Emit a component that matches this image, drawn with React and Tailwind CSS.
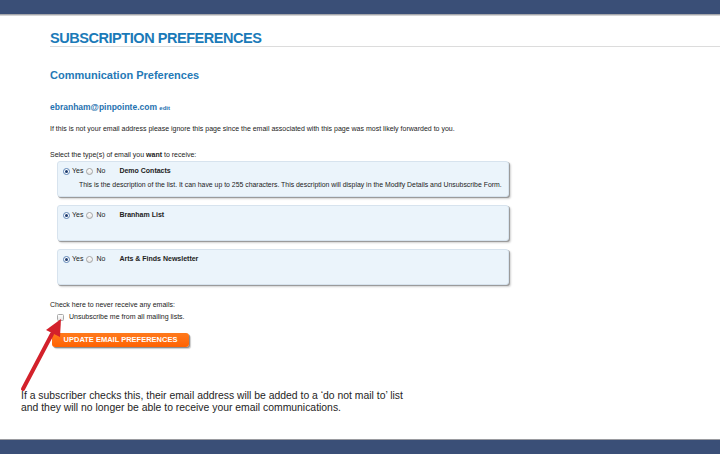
import React from "react";

function Radio({ checked }) {
  return checked ? (
    <span className="inline-flex items-center justify-center w-[7px] h-[7px] rounded-full border border-[#5b83b5] bg-white shrink-0">
      <span className="w-[3px] h-[3px] rounded-full bg-[#1d3b6e]" />
    </span>
  ) : (
    <span className="inline-block w-[7px] h-[7px] rounded-full border border-[#a3a3a3] bg-gradient-to-b from-white to-[#e4e4e4] shrink-0" />
  );
}

function ListBox({ name, desc }) {
  return (
    <div className="ml-[7px] w-[452px] h-[36px] rounded-[3px] border border-[#d7e3ee] bg-[#ebf4fb] shadow-[1px_1px_0_#9b9b9b,2px_2px_2px_rgba(0,0,0,0.18)] pl-[5px] pt-[4px]">
      <div className="flex items-center h-[10px] text-[7px] leading-[10px] text-[#222]">
        <Radio checked />
        <span className="ml-[2px]">Yes</span>
        <span className="ml-[3px] flex items-center">
          <Radio />
        </span>
        <span className="ml-[3px]">No</span>
        <span className="ml-[14px] font-bold">{name}</span>
      </div>
      {desc && (
        <div className="mt-[4px] ml-[16px] text-[6.9px] leading-[10px] text-[#222] whitespace-nowrap">
          {desc}
        </div>
      )}
    </div>
  );
}

export default function App() {
  return (
    <div className="relative w-[720px] h-[454px] overflow-hidden bg-white flex flex-col font-['Liberation_Sans',Arial,sans-serif]">
      <div className="h-[14px] shrink-0 bg-[#3a4f77]" />
      <div className="h-[2px] shrink-0 bg-gradient-to-b from-[#8f9197] to-[#ececec]" />

      <div className="pl-[50px]">
        <div className="mt-[15px] border-b border-[#dcdcdc]">
          <h1 className="text-[14.5px] leading-[15px] font-bold tracking-[-0.45px] text-[#1a7ab8]">
            SUBSCRIPTION PREFERENCES
          </h1>
        </div>

        <h2 className="mt-[22px] text-[11px] leading-[13px] font-bold text-[#2579b6]">
          Communication Preferences
        </h2>

        <div className="mt-[20px] text-[8.5px] leading-[11px] font-bold text-[#1f72b0]">
          ebranham@pinpointe.com <span className="text-[6px] font-bold">edit</span>
        </div>

        <p className="mt-[10px] text-[7px] leading-[10px] text-[#222]">
          If this is not your email address please ignore this page since the email associated with this page was most likely forwarded to you.
        </p>

        <p className="mt-[16px] text-[7px] leading-[10px] text-[#222]">
          Select the type(s) of email you <span className="font-bold">want</span> to receive:
        </p>

        <div className="mt-[1px] flex flex-col gap-[8px]">
          <ListBox
            name="Demo Contacts"
            desc="This is the description of the list. It can have up to 255 characters. This description will display in the Modify Details and Unsubscribe Form."
          />
          <ListBox name="Branham List" />
          <ListBox name="Arts & Finds Newsletter" />
        </div>

        <p className="mt-[15px] text-[7px] leading-[10px] text-[#222]">
          Check here to never receive any emails:
        </p>

        <div className="mt-[3px] ml-[7px] flex items-center h-[8px] text-[7px] leading-[10px] text-[#222]">
          <span className="w-[7px] h-[7px] rounded-[1.5px] border border-[#a8a8a8] bg-gradient-to-b from-white to-[#e6e6e6] shrink-0" />
          <span className="ml-[5px]">Unsubscribe me from all mailing lists.</span>
        </div>

        <div className="mt-[12px] ml-[2px] w-[137px] h-[14px] rounded-[3px] bg-gradient-to-b from-[#ff7a1c] to-[#ff6200] shadow-[1px_1px_0_#8e8e8e,2px_2px_1px_rgba(0,0,0,0.2)] flex items-center justify-center text-[7.5px] leading-[14px] font-bold text-white">
          UPDATE EMAIL PREFERENCES
        </div>
      </div>

      <div className="mt-[43px] pl-[21px] text-[10.4px] leading-[12px] text-[#1e1e1e]">
        <p>If a subscriber checks this, their email address will be added to a ‘do not mail to’ list</p>
        <p>and they will no longer be able to receive your email communications.</p>
      </div>

      <div className="mt-auto h-[15px] shrink-0 border-t border-[#9a9ba0] bg-[#3a4f77]" />

      <svg className="absolute left-0 top-0 pointer-events-none" width="720" height="454" viewBox="0 0 720 454">
        <line x1="23" y1="389" x2="52" y2="334" stroke="#d3212b" strokeWidth="4" strokeLinecap="round" />
        <polygon points="61,319 60,337 46,330" fill="#d3212b" />
      </svg>
    </div>
  );
}
